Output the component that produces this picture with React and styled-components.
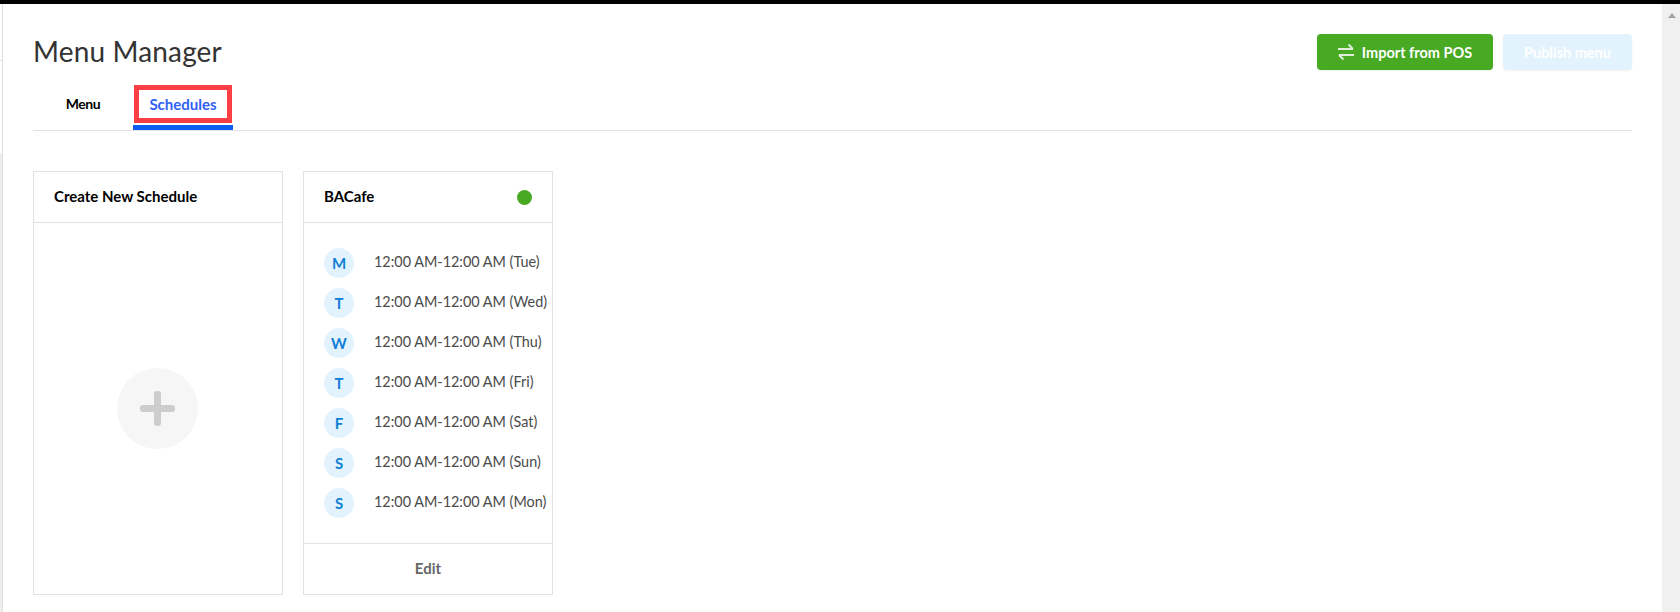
import React from 'react';
import styled, { createGlobalStyle } from 'styled-components';

const GlobalStyle = createGlobalStyle`
  html, body {
    margin: 0;
    padding: 0;
    height: 612px;
    overflow: hidden;
    background: #fff;
    font-family: "Lato", "Open Sans", sans-serif;
  }
`;

const Frame = styled.div`
  width: 1680px;
  height: 612px;
  display: flex;
  flex-direction: column;
  overflow: hidden;
`;

const TopBar = styled.div`
  height: 4px;
  background: #000;
  flex: none;
`;

const Body = styled.div`
  flex: 1;
  display: flex;
  min-height: 0;
`;

const SideEdge = styled.div`
  width: 3px;
  flex: none;
  box-sizing: border-box;
  border-right: 1px solid #e0e0e0;
  display: flex;
  flex-direction: column;
`;

const SideTick = styled.div`
  height: 1px;
  margin-top: 56px;
  background: #e4e4e4;
`;

const SideBlock = styled.div`
  flex: 1;
  margin-top: 92px;
  background: #eeeeee;
`;

const Main = styled.main`
  flex: 1;
  padding: 30px 0 0 30px;
  min-width: 0;
`;

const Scrollbar = styled.div`
  width: 18px;
  flex: none;
  box-sizing: border-box;
  background: #f0f0f0;
  display: flex;
  padding: 9px 0 0 6px;
`;

const ScrollArrow = styled.div`
  width: 0;
  height: 0;
  border-left: 4.5px solid transparent;
  border-right: 4.5px solid transparent;
  border-bottom: 5px solid #a3a3a3;
`;

const Content = styled.div`
  width: 1599px;
`;

const Header = styled.div`
  display: flex;
  justify-content: space-between;
  align-items: flex-start;
  height: 53px;
`;

const Title = styled.h1`
  margin: 0;
  font-size: 28px;
  line-height: 34px;
  font-weight: 400;
  color: #333;
  letter-spacing: 0.15px;
`;

const Actions = styled.div`
  display: flex;
  gap: 10px;
`;

const ActionButton = styled.button`
  height: 36px;
  width: ${(p) => p.$width}px;
  border: 0;
  border-radius: 4px;
  display: flex;
  align-items: center;
  justify-content: center;
  gap: 8px;
  padding: 0;
  font-family: inherit;
  font-size: 14.5px;
  font-weight: 700;
  color: #fff;
  background: ${(p) => (p.$disabled ? '#e3f3fd' : '#48a923')};
  box-shadow: 0 1px 2px rgba(0, 0, 0, 0.06);
`;

const Tabs = styled.div`
  display: flex;
  height: 43px;
  border-bottom: 1px solid #e2e2e2;
`;

const Tab = styled.div`
  width: ${(p) => p.$width}px;
  height: 43px;
  box-sizing: border-box;
  display: flex;
  align-items: center;
  justify-content: center;
  position: relative;
  padding-bottom: 5px;
  font-size: ${(p) => (p.$active ? '15px' : '14px')};
  letter-spacing: ${(p) => (p.$active ? '0' : '-0.4px')};
  font-weight: 700;
  color: ${(p) => (p.$active ? '#2f62f5' : '#000')};
  border-bottom: 5px solid ${(p) => (p.$active ? '#0d5ef5' : 'transparent')};
`;

const Highlight = styled.div`
  position: absolute;
  left: 1px;
  right: 1px;
  top: -2px;
  height: 38px;
  box-sizing: border-box;
  border: 5px solid #fb3f44;
`;

const Cards = styled.div`
  display: flex;
  gap: 20px;
  margin-top: 40px;
`;

const Card = styled.section`
  width: 250px;
  height: 424px;
  box-sizing: border-box;
  border: 1px solid #e2e2e2;
  display: flex;
  flex-direction: column;
`;

const CardHeader = styled.div`
  height: 51px;
  flex: none;
  box-sizing: border-box;
  border-bottom: 1px solid #e2e2e2;
  padding: 0 20px;
  display: flex;
  align-items: center;
  justify-content: space-between;
`;

const CardTitle = styled.span`
  padding-bottom: 2px;
  font-size: 15px;
  font-weight: 700;
  color: #000;
`;

const StatusDot = styled.span`
  width: 15px;
  height: 15px;
  border-radius: 50%;
  background: #48a923;
`;

const AddArea = styled.div`
  flex: 1;
  display: flex;
  align-items: center;
  justify-content: center;
  padding-right: 1px;
`;

const AddCircle = styled.div`
  width: 81px;
  height: 81px;
  border-radius: 50%;
  background: #f6f6f6;
  display: flex;
  align-items: center;
  justify-content: center;
`;

const DayList = styled.ul`
  flex: 1;
  list-style: none;
  margin: 0;
  padding: 25px 0 0 20px;
  display: flex;
  flex-direction: column;
  gap: 10px;
`;

const DayRow = styled.li`
  display: flex;
  align-items: center;
  gap: 20px;
  height: 30px;
  white-space: nowrap;
  font-size: 14.4px;
  color: #4a4a4a;
`;

const DayBadge = styled.span`
  width: 30px;
  height: 30px;
  flex: none;
  box-sizing: border-box;
  padding-bottom: 1px;
  border-radius: 50%;
  background: #e3f3fd;
  color: #0f7fd6;
  font-size: 15px;
  font-weight: 700;
  display: flex;
  align-items: center;
  justify-content: center;
`;

const DayTime = styled.span`
  padding-bottom: 3px;
`;

const CardFooter = styled.div`
  height: 51px;
  flex: none;
  box-sizing: border-box;
  border-top: 1px solid #e2e2e2;
  padding-bottom: 2px;
  display: flex;
  align-items: center;
  justify-content: center;
  font-size: 15px;
  font-weight: 700;
  color: #666;
`;

const SwapIcon = () => (
  <svg width="16" height="16" viewBox="0 0 16 16" fill="none" stroke="#dfeed8" strokeWidth="2">
    <path d="M0 5h15M10.5 .5 15 5M16 11H1M5.5 15.5 1 11" />
  </svg>
);

const PlusIcon = () => (
  <svg width="35" height="35" viewBox="0 0 35 35">
    <rect x="0" y="14" width="35" height="7" rx="3" fill="#cdcdcd" />
    <rect x="14" y="0" width="7" height="35" rx="3" fill="#cdcdcd" />
  </svg>
);

const days = [
  ['M', 'Tue'],
  ['T', 'Wed'],
  ['W', 'Thu'],
  ['T', 'Fri'],
  ['F', 'Sat'],
  ['S', 'Sun'],
  ['S', 'Mon'],
];

export default function App() {
  return (
    <Frame>
      <GlobalStyle />
      <TopBar />
      <Body>
        <SideEdge>
          <SideTick />
          <SideBlock />
        </SideEdge>
        <Main>
          <Content>
            <Header>
              <Title>Menu Manager</Title>
              <Actions>
                <ActionButton $width={176}>
                  <SwapIcon />
                  Import from POS
                </ActionButton>
                <ActionButton $width={129} $disabled>
                  Publish menu
                </ActionButton>
              </Actions>
            </Header>
            <Tabs>
              <Tab $width={100}>Menu</Tab>
              <Tab $width={100} $active>
                Schedules
                <Highlight />
              </Tab>
            </Tabs>
            <Cards>
              <Card>
                <CardHeader>
                  <CardTitle>Create New Schedule</CardTitle>
                </CardHeader>
                <AddArea>
                  <AddCircle>
                    <PlusIcon />
                  </AddCircle>
                </AddArea>
              </Card>
              <Card>
                <CardHeader>
                  <CardTitle>BACafe</CardTitle>
                  <StatusDot />
                </CardHeader>
                <DayList>
                  {days.map(([letter, next], i) => (
                    <DayRow key={i}>
                      <DayBadge>{letter}</DayBadge>
                      <DayTime>12:00 AM-12:00 AM ({next})</DayTime>
                    </DayRow>
                  ))}
                </DayList>
                <CardFooter>Edit</CardFooter>
              </Card>
            </Cards>
          </Content>
        </Main>
        <Scrollbar>
          <ScrollArrow />
        </Scrollbar>
      </Body>
    </Frame>
  );
}
